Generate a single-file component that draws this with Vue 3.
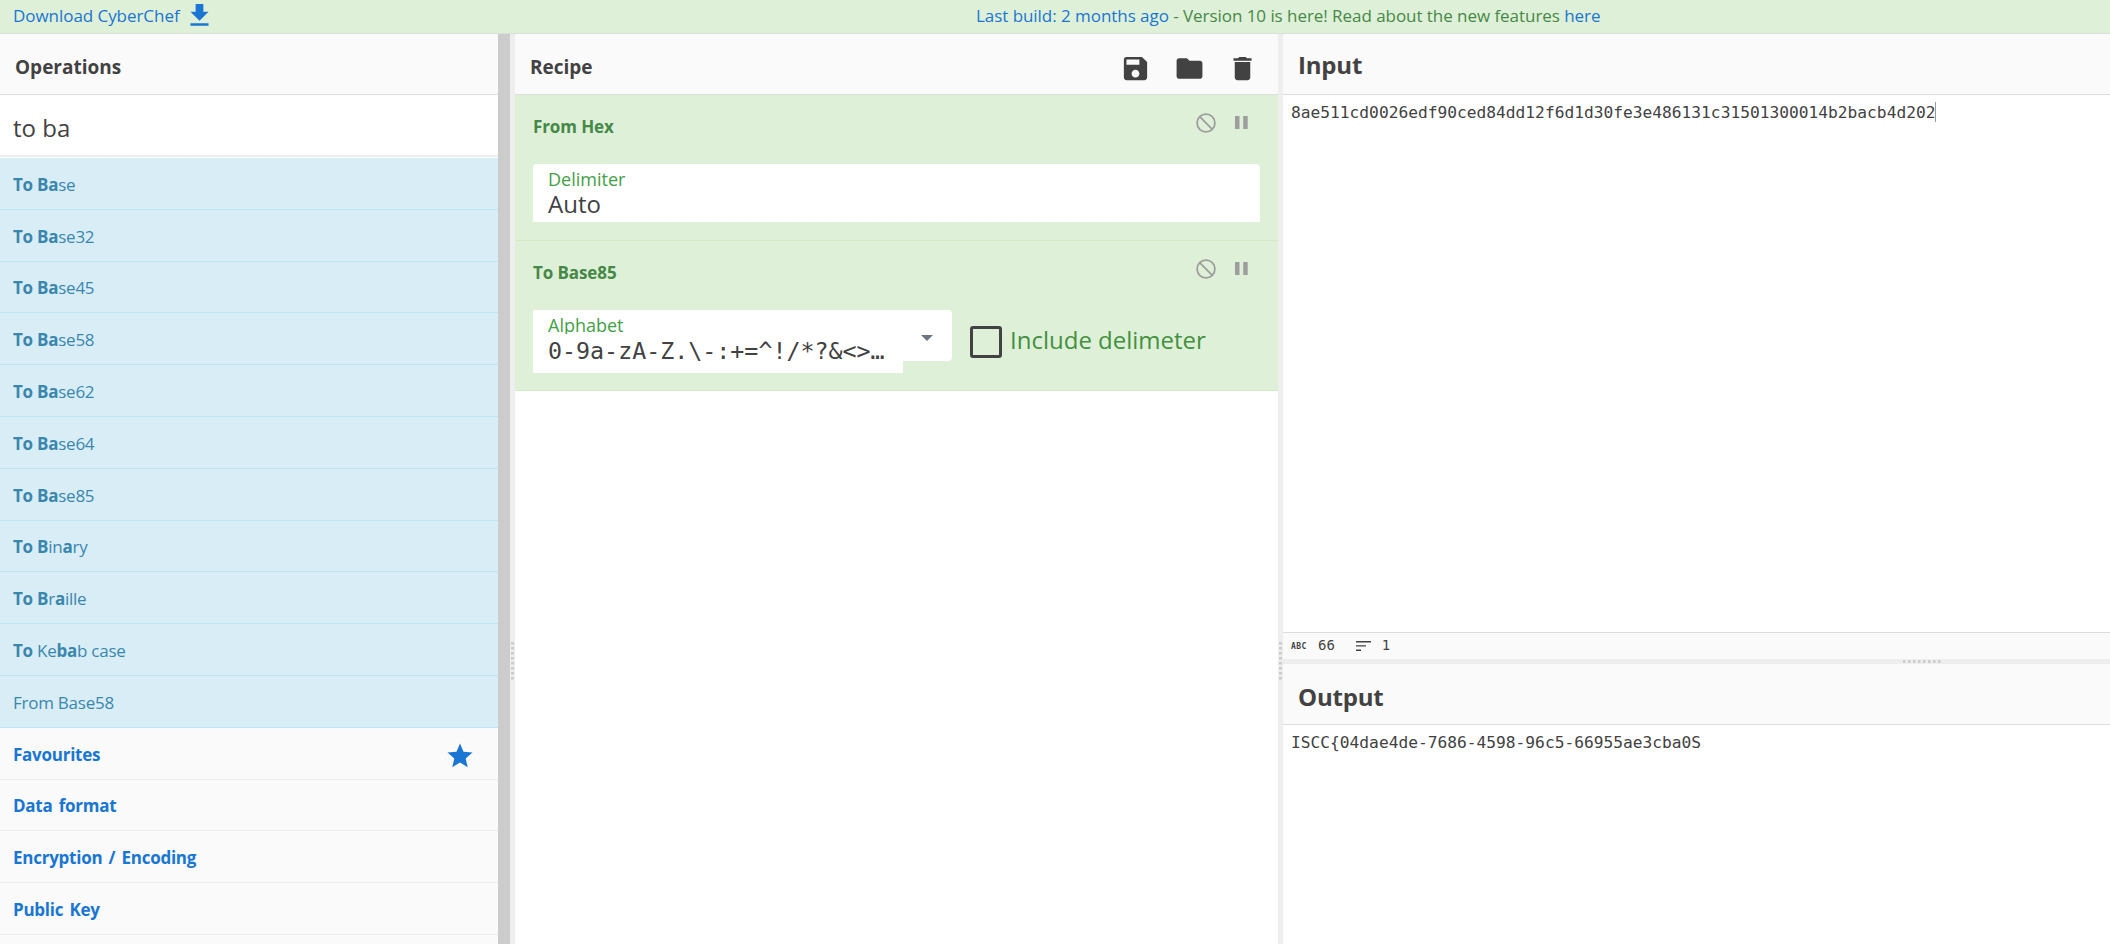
<template>
  <div class="app">
    <div class="banner">
      <a class="banner__download">
        <span>Download CyberChef</span>
        <svg class="icon" viewBox="0 0 24 24"><path d="M19 9h-4V3H9v6H5l7 7 7-7zM5 18v2h14v-2H5z" /></svg>
      </a>
      <div class="banner__notice">
        <a>Last build: 2 months ago</a> - Version 10 is here! Read about the new features <a>here</a>
      </div>
    </div>

    <div class="workspace">
      <!-- Operations -->
      <section class="operations">
        <div class="title"><span class="title__text">Operations</span></div>
        <div class="search"><span>to ba</span></div>
        <ul class="op-list">
          <li v-for="(op, i) in operations" :key="i" class="op-list__item">
            <span class="op-list__name"><component :is="part.b ? 'b' : 'span'" v-for="(part, j) in op" :key="j">{{ part.t }}</component></span>
          </li>
        </ul>
        <div v-for="cat in categories" :key="cat" class="category">
          <span class="category__name">{{ cat }}</span>
          <svg v-if="cat === 'Favourites'" class="icon icon--star" viewBox="0 0 24 24">
            <path d="M12 17.27L18.18 21l-1.64-7.03L22 9.24l-7.19-.61L12 2 9.19 8.63 2 9.24l5.46 4.73L5.82 21z" />
          </svg>
        </div>
      </section>
      <div class="scrollbar" />
      <div class="gutter"><div class="grip" /></div>

      <!-- Recipe -->
      <section class="recipe">
        <div class="title">
          <span class="title__text">Recipe</span>
          <div class="title__actions">
            <svg v-for="(d, name) in actions" :key="name" class="icon" viewBox="0 0 24 24"><path :d="d" /></svg>
          </div>
        </div>

        <div v-for="step in steps" :key="step" class="step" :class="{ 'step--last': step === 'To Base85' }">
          <div class="step__head">
            <span class="step__name">{{ step }}</span>
            <div class="step__controls">
              <svg class="step__disable" viewBox="0 0 20 20">
                <circle cx="10" cy="10" r="8.9" />
                <path d="M3.7 3.7l12.6 12.6" />
              </svg>
              <svg class="step__pause" viewBox="0 0 13 13"><path d="M0 0h4.5v13H0zM8.2 0h4.5v13H8.2z" /></svg>
            </div>
          </div>

          <div v-if="step === 'From Hex'" class="field">
            <label class="field__label">Delimiter</label>
            <span class="field__value">Auto</span>
          </div>

          <div v-else class="step__args">
            <div class="select">
              <div class="select__input">
                <label class="field__label field__label--clipped">Alphabet</label>
                <span class="select__value">0-9a-zA-Z.\-:+=^!/*?&amp;&lt;&gt;…</span>
              </div>
              <i class="select__caret" />
            </div>
            <div class="checkbox">
              <span class="checkbox__box" />
              <span class="checkbox__label">Include delimeter</span>
            </div>
          </div>
        </div>
      </section>
      <div class="gutter"><div class="grip" /></div>

      <!-- Input / Output -->
      <section class="io">
        <div class="title"><span class="title__text title__text--big">Input</span></div>
        <div class="editor editor--input"><span>8ae511cd0026edf90ced84dd12f6d1d30fe3e486131c31501300014b2bacb4d202</span><i class="cursor" /></div>
        <div class="status">
          <span class="status__abc">ABC</span>
          <span class="status__num">66</span>
          <svg class="status__lines" viewBox="0 0 15 10"><path d="M0 0h15v1.4H0zM0 4.2h10v1.4H0zM0 8.5h5v1.4H0z" /></svg>
          <span class="status__num">1</span>
        </div>
        <div class="gutter gutter--row"><div class="grip grip--row" /></div>
        <div class="title title--output"><span class="title__text title__text--big">Output</span></div>
        <div class="editor"><span>ISCC{04dae4de-7686-4598-96c5-66955ae3cba0S</span></div>
      </section>
    </div>
  </div>
</template>

<script setup>
const b = (t) => ({ t, b: true });
const n = (t) => ({ t, b: false });

const operations = [
  [b('To Ba'), n('se')],
  [b('To Ba'), n('se32')],
  [b('To Ba'), n('se45')],
  [b('To Ba'), n('se58')],
  [b('To Ba'), n('se62')],
  [b('To Ba'), n('se64')],
  [b('To Ba'), n('se85')],
  [b('To B'), n('in'), b('a'), n('ry')],
  [b('To B'), n('r'), b('a'), n('ille')],
  [b('To '), n('Ke'), b('ba'), n('b case')],
  [n('From Base58')],
];

const categories = ['Favourites', 'Data format', 'Encryption / Encoding', 'Public Key'];

const steps = ['From Hex', 'To Base85'];

const actions = {
  save: 'M17 3H5c-1.11 0-2 .9-2 2v14c0 1.1.89 2 2 2h14c1.1 0 2-.9 2-2V7l-4-4zm-5 16c-1.66 0-3-1.34-3-3s1.34-3 3-3 3 1.34 3 3-1.34 3-3 3zm3-10H5V5h10v4z',
  load: 'M10 4H4c-1.1 0-1.99.9-1.99 2L2 18c0 1.1.9 2 2 2h16c1.1 0 2-.9 2-2V8c0-1.1-.9-2-2-2h-8l-2-2z',
  clear: 'M6 19c0 1.1.9 2 2 2h8c1.1 0 2-.9 2-2V7H6v12zM19 4h-3.5l-1-1h-5l-1 1H5v2h14V4z',
};
</script>

<style>
body {
  overflow: hidden;
}
</style>

<style scoped>
.app {
  width: 100%;
  height: 944px;
  display: flex;
  flex-direction: column;
  overflow: hidden;
  background: #fff;
  color: #424242;
  font-family: "Open Sans", "Noto Sans", sans-serif;
  font-size: 17px;
}

.app * {
  box-sizing: border-box;
  white-space: nowrap;
}

.icon {
  width: 31px;
  height: 31px;
  flex: none;
  fill: currentColor;
}

.banner {
  display: flex;
  flex: none;
  height: 34px;
  padding-left: 13px;
  line-height: 31px;
  letter-spacing: -0.05px;
  background: #dff0d8;
  border-bottom: 1px solid #ddd;
  color: #468847;
}

.banner a {
  color: #1976d2;
}

.banner__download {
  display: flex;
  width: 963px;
  gap: 4px;
}

.workspace {
  display: flex;
  flex: 1;
  min-height: 0;
}

.title {
  display: flex;
  flex: none;
  align-items: center;
  justify-content: space-between;
  height: 61px;
  padding: 0 20px 0 15px;
  background: #fafafa;
  border-bottom: 1px solid #ddd;
}

.title--output {
  padding-top: 5px;
}

.title__text {
  padding-top: 6px;
  font-size: 19px;
  font-weight: 700;
}

.title__text--big {
  padding-top: 0;
  font-size: 24px;
  letter-spacing: -0.2px;
}

.title__actions {
  display: flex;
  gap: 22.5px;
  padding-top: 8px;
}

.operations {
  flex: none;
  width: 498px;
  overflow: hidden;
  background: #fafafa;
}

.search {
  height: 63px;
  padding: 14px 13px 0;
  background: #fff linear-gradient(#eee, #eee) 0 60px / 100% 2px no-repeat;
  font-size: 24px;
  line-height: 38px;
}

.op-list {
  margin: 0;
  padding: 0;
  list-style: none;
}

.op-list__item,
.category {
  display: flex;
  align-items: center;
  height: 51.8px;
  padding: 2px 23px 0 13px;
}

.op-list__item {
  background: #d9edf7;
  border-bottom: 1px solid #bce8f1;
  color: #3a87ad;
  letter-spacing: -0.25px;
}

.category {
  justify-content: space-between;
  border-bottom: 1px solid #eee;
  color: #1976d2;
  font-weight: 700;
  letter-spacing: -0.25px;
  word-spacing: 2px;
}

.icon--star {
  width: 30px;
  height: 30px;
  margin-top: 3px;
}

.scrollbar {
  flex: none;
  width: 12px;
  background: #ccc;
}

.gutter {
  flex: none;
  width: 5px;
  padding: 608px 1px 0;
  background: #eee;
}

.grip {
  width: 3px;
  height: 38px;
  background: repeating-linear-gradient(#ccc 0 2px, #ddd 2px 3px, #eee 3px 5px);
}

.gutter--row {
  width: 100%;
  height: 5px;
  padding: 1px 0 0 620px;
}

.grip--row {
  width: 38px;
  height: 3px;
  background: repeating-linear-gradient(90deg, #ccc 0 2px, #ddd 2px 3px, #eee 3px 5px);
}

.recipe {
  flex: none;
  width: 763px;
}

.step {
  height: 146px;
  padding: 0 18px;
  background: #dff0d8;
  border-bottom: 1px solid #d6e9c6;
  color: #468847;
}

.step--last {
  height: 150px;
}

.step__head {
  display: flex;
  justify-content: space-between;
  height: 69px;
  padding: 18px 12px 0 0;
}

.step__name {
  font-weight: 700;
  line-height: 28px;
  letter-spacing: -0.1px;
}

.step__controls {
  display: flex;
  gap: 19px;
  color: #9e9e9e;
}

.step__disable {
  width: 20px;
  height: 20px;
  fill: none;
  stroke: currentColor;
  stroke-width: 1.8;
}

.step__pause {
  width: 13px;
  height: 13px;
  margin-top: 3px;
  fill: currentColor;
}

.field {
  display: flex;
  flex-direction: column;
  height: 58px;
  padding: 5px 15px 0;
  background: #fff;
  border-radius: 4px 4px 0 0;
}

.field__label {
  height: 21px;
  font-size: 18px;
  line-height: 21px;
  color: #43a047;
}

.field__label--clipped {
  height: 19px;
  overflow: hidden;
}

.field__value {
  font-size: 24px;
  line-height: 27px;
  color: #424242;
}

.step__args {
  display: flex;
}

.select {
  display: flex;
  width: 419px;
  height: 51px;
  background: #fff;
  border-radius: 0 4px 4px 0;
}

/* the input is taller than the select that wraps it */
.select__input {
  display: flex;
  flex-direction: column;
  width: 370px;
  height: 63px;
  padding: 5px 15px 0;
  background: #fff;
}

.select__value {
  margin-top: 2px;
  font-family: "DejaVu Sans Mono", monospace;
  font-size: 23.3px;
  line-height: 30px;
  color: #424242;
}

.select__caret {
  width: 12px;
  height: 6px;
  margin: 25px 0 0 18px;
  border: 6px solid transparent;
  border-top-color: #6c757d;
  border-bottom: 0;
}

.checkbox {
  display: flex;
  gap: 8px;
  margin: 16px 0 0 18px;
}

.checkbox__box {
  width: 32px;
  height: 32px;
  border: 3px solid #424242;
  border-radius: 3px;
}

.checkbox__label {
  font-size: 24px;
  line-height: 28px;
  color: #43903f;
}

.io {
  display: flex;
  flex: 1;
  flex-direction: column;
  min-width: 0;
}

.editor {
  display: flex;
  padding: 7px 8px 0;
  font-family: "DejaVu Sans Mono", monospace;
  font-size: 16.23px;
  line-height: 21px;
}

.editor--input {
  flex: none;
  height: 537px;
}

.cursor {
  width: 1px;
  height: 20px;
  background: #999;
}

.status {
  display: flex;
  flex: none;
  align-items: center;
  height: 27px;
  padding-left: 8px;
  background: #fafafa;
  border-top: 1px solid #ddd;
  font-family: "DejaVu Sans Mono", monospace;
}

.status__abc {
  width: 27px;
  font-size: 8px;
  font-weight: 700;
  letter-spacing: 0.4px;
}

.status__num {
  margin-top: -2px;
  font-size: 14px;
  line-height: 24px;
}

.status__lines {
  width: 15px;
  height: 10px;
  margin: 0 11px 0 21px;
  fill: #424242;
}
</style>
